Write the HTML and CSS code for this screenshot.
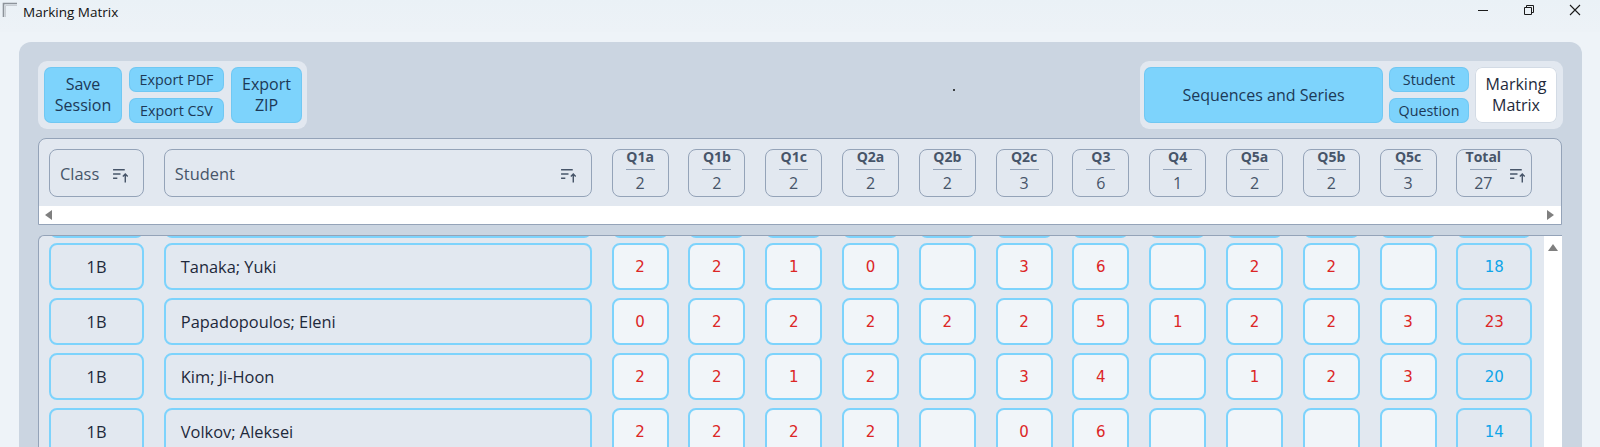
FILE: index.html
```html
<!DOCTYPE html>
<html lang="en">
<head>
<meta charset="utf-8">
<title>Marking Matrix</title>
<link rel="stylesheet" href="styles.css">
</head>
<body>
<header class="titlebar">
  <svg class="app-icon" width="18" height="18" viewBox="0 0 18 18"><path d="M3.5 17V3.5H17" fill="none" stroke="#8d939a" stroke-width="1.6"/><path d="M5.5 17V5.5H17" fill="none" stroke="#c9ced4" stroke-width="1"/></svg>
  <span class="app-title">Marking Matrix</span>
  <div class="win-controls">
    <svg class="win-btn" width="12" height="12" viewBox="0 0 12 12"><path d="M1 6.5h10" stroke="#1b1b1b" stroke-width="1"/></svg>
    <svg class="win-btn" width="12" height="12" viewBox="0 0 12 12"><path d="M1.5 3.5h7v7h-7z M3.5 3.5V1.5h7v7h-2" fill="none" stroke="#1b1b1b" stroke-width="1"/></svg>
    <svg class="win-btn" width="12" height="12" viewBox="0 0 12 12"><path d="M1 1l10 10M11 1L1 11" stroke="#1b1b1b" stroke-width="1.1"/></svg>
  </div>
</header>

<main class="window">
  <section class="panel">
    <div class="toolbar">
      <div class="btn-group">
        <button class="btn btn-tall w-save">Save<br>Session</button>
        <div class="btn-stack w-export">
          <button class="btn btn-small">Export PDF</button>
          <button class="btn btn-small">Export CSV</button>
        </div>
        <button class="btn btn-tall w-zip">Export<br>ZIP</button>
      </div>
      <div class="toolbar-mid"><span class="dot"></span></div>
      <div class="btn-group">
        <button class="btn btn-tall w-topic">Sequences and Series</button>
        <div class="btn-stack w-view">
          <button class="btn btn-small">Student</button>
          <button class="btn btn-small">Question</button>
        </div>
        <button class="btn btn-tall btn-active w-matrix">Marking<br>Matrix</button>
      </div>
    </div>

    <div class="grid-head">
      <div class="cols head-row">
        <div class="hcell h-class"><span>Class</span>
          <svg class="sort" width="17" height="17" viewBox="0 0 16 16"><path d="M1 3.5h11M1 7.5h7M1 11.5h4M12.5 15.5V7.5M10.2 9.8l2.3-2.3 2.3 2.3" fill="none" stroke="#475569" stroke-width="1.35"/></svg>
        </div>
        <div class="hcell h-name"><span>Student</span>
          <svg class="sort" width="17" height="17" viewBox="0 0 16 16"><path d="M1 3.5h11M1 7.5h7M1 11.5h4M12.5 15.5V7.5M10.2 9.8l2.3-2.3 2.3 2.3" fill="none" stroke="#475569" stroke-width="1.35"/></svg>
        </div>
        <div class="hcell h-q"><b>Q1a</b><i class="rule"></i><span>2</span></div>
        <div class="hcell h-q"><b>Q1b</b><i class="rule"></i><span>2</span></div>
        <div class="hcell h-q"><b>Q1c</b><i class="rule"></i><span>2</span></div>
        <div class="hcell h-q"><b>Q2a</b><i class="rule"></i><span>2</span></div>
        <div class="hcell h-q"><b>Q2b</b><i class="rule"></i><span>2</span></div>
        <div class="hcell h-q"><b>Q2c</b><i class="rule"></i><span>3</span></div>
        <div class="hcell h-q"><b>Q3</b><i class="rule"></i><span>6</span></div>
        <div class="hcell h-q"><b>Q4</b><i class="rule"></i><span>1</span></div>
        <div class="hcell h-q"><b>Q5a</b><i class="rule"></i><span>2</span></div>
        <div class="hcell h-q"><b>Q5b</b><i class="rule"></i><span>2</span></div>
        <div class="hcell h-q"><b>Q5c</b><i class="rule"></i><span>3</span></div>
        <div class="hcell h-total">
          <div class="total-stack"><b>Total</b><i class="rule"></i><span>27</span></div>
          <svg class="sort" width="17" height="17" viewBox="0 0 16 16"><path d="M1 3.5h11M1 7.5h7M1 11.5h4M12.5 15.5V7.5M10.2 9.8l2.3-2.3 2.3 2.3" fill="none" stroke="#475569" stroke-width="1.35"/></svg>
        </div>
      </div>
      <div class="hscroll">
        <span class="arrow arrow-left"></span>
        <span class="arrow arrow-right"></span>
      </div>
    </div>

    <div class="grid-body">
      <div class="rows">
        <div class="peek">
          <div class="cols row">
            <div class="cell c-class"></div><div class="cell c-name"></div>
            <div class="cell c-q"></div><div class="cell c-q"></div><div class="cell c-q"></div><div class="cell c-q"></div>
            <div class="cell c-q"></div><div class="cell c-q"></div><div class="cell c-q"></div><div class="cell c-q"></div>
            <div class="cell c-q"></div><div class="cell c-q"></div><div class="cell c-q"></div>
            <div class="cell c-total"></div>
          </div>
        </div>

        <div class="cols row">
          <div class="cell c-class">1B</div><div class="cell c-name">Tanaka; Yuki</div>
          <div class="cell c-q">2</div><div class="cell c-q">2</div><div class="cell c-q">1</div><div class="cell c-q">0</div>
          <div class="cell c-q"></div><div class="cell c-q">3</div><div class="cell c-q">6</div><div class="cell c-q"></div>
          <div class="cell c-q">2</div><div class="cell c-q">2</div><div class="cell c-q"></div>
          <div class="cell c-total">18</div>
        </div>

        <div class="cols row">
          <div class="cell c-class">1B</div><div class="cell c-name">Papadopoulos; Eleni</div>
          <div class="cell c-q">0</div><div class="cell c-q">2</div><div class="cell c-q">2</div><div class="cell c-q">2</div>
          <div class="cell c-q">2</div><div class="cell c-q">2</div><div class="cell c-q">5</div><div class="cell c-q">1</div>
          <div class="cell c-q">2</div><div class="cell c-q">2</div><div class="cell c-q">3</div>
          <div class="cell c-total is-high">23</div>
        </div>

        <div class="cols row">
          <div class="cell c-class">1B</div><div class="cell c-name">Kim; Ji-Hoon</div>
          <div class="cell c-q">2</div><div class="cell c-q">2</div><div class="cell c-q">1</div><div class="cell c-q">2</div>
          <div class="cell c-q"></div><div class="cell c-q">3</div><div class="cell c-q">4</div><div class="cell c-q"></div>
          <div class="cell c-q">1</div><div class="cell c-q">2</div><div class="cell c-q">3</div>
          <div class="cell c-total">20</div>
        </div>

        <div class="cols row">
          <div class="cell c-class">1B</div><div class="cell c-name">Volkov; Aleksei</div>
          <div class="cell c-q">2</div><div class="cell c-q">2</div><div class="cell c-q">2</div><div class="cell c-q">2</div>
          <div class="cell c-q"></div><div class="cell c-q">0</div><div class="cell c-q">6</div><div class="cell c-q"></div>
          <div class="cell c-q"></div><div class="cell c-q"></div><div class="cell c-q"></div>
          <div class="cell c-total">14</div>
        </div>
      </div>
      <div class="vscroll"><span class="arrow arrow-up"></span></div>
    </div>
  </section>
</main>
</body>
</html>
```

FILE: styles.css
```css
* { box-sizing: border-box; }

html, body {
  margin: 0;
  height: 447px;
  overflow: hidden;
}

body {
  background: #eef3f8;
  font-family: "Open Sans", "Noto Sans", sans-serif;
  color: #1e293b;
}

/* ---- window chrome ---- */
.titlebar {
  height: 32px;
  display: flex;
  align-items: flex-start;
  background: linear-gradient(#eaf1f6, #edf2f7);
}

.app-icon {
  margin: 0 0 0 0;
}

.app-title {
  margin: 3px 0 0 5px;
  font-size: 13.5px;
  line-height: 18px;
  color: #111;
}

.win-controls {
  margin-left: auto;
  display: flex;
  gap: 34px;
  padding: 4px 19px 0 0;
}

/* ---- main panel ---- */
.window {
  padding: 10px 18px 0 19px;
}

.panel {
  background: #cbd5e1;
  border-radius: 12px 12px 0 0;
  padding: 19px 19px 0 19px;
  height: 420px;
}

.toolbar {
  display: flex;
  align-items: stretch;
  height: 68px;
}

.btn-group {
  display: flex;
  gap: 7px;
  padding: 6px 5px 6px 6px;
  background: #e2e8f0;
  border-radius: 9px;
}

.btn-group + .toolbar-mid + .btn-group {
  gap: 6px;
  padding: 6px 6px 6px 4px;
}

.btn {
  font-family: inherit;
  border: none;
  margin: 0;
  padding: 0;
  background: #7dd3fc;
  color: #1c3957;
  border-radius: 7px;
  box-shadow: inset 0 0 0 1px rgba(56, 149, 205, 0.18);
  cursor: pointer;
}

.btn-tall {
  height: 56px;
  font-size: 16px;
  line-height: 21px;
}

.btn-small {
  height: 25px;
  font-size: 14.3px;
  line-height: 20px;
}

.btn-stack {
  display: flex;
  flex-direction: column;
  justify-content: space-between;
}

.btn-active {
  background: #ffffff;
  color: #1e293b;
  box-shadow: inset 0 0 0 1px #d3dbe5;
}

.w-save { width: 78px; }
.w-export { width: 95px; }
.w-zip { width: 71px; }
.w-topic { width: 239px; }
.w-view { width: 80px; }
.w-matrix { width: 82px; }

.toolbar-mid {
  flex: 1;
  display: flex;
  align-items: flex-start;
}

.dot {
  width: 2px;
  height: 2px;
  background: #111;
  border-radius: 1px;
  margin: 28px 0 0 646px;
}

/* ---- shared column template ---- */
.cols {
  display: grid;
  grid-template-columns: 95px 428px repeat(11, 57px) 76px;
  column-gap: 19.8px;
}

/* ---- header block ---- */
.grid-head {
  margin: 9px 1px 0 0;
  background: #e2e8f0;
  border: 1px solid #94a3b8;
  border-radius: 8px 8px 0 0;
  overflow: hidden;
}

.head-row {
  padding: 10px 0 9px 10px;
}

.hcell {
  height: 48px;
  border: 1px solid #94a3b8;
  border-radius: 8px;
  color: #475569;
}

.h-class, .h-name {
  display: flex;
  align-items: center;
  justify-content: space-between;
  font-size: 16.4px;
  padding: 0 14px 0 10px;
}

.h-name {
  padding-right: 14px;
}

.sort {
  flex: none;
  margin-top: 2px;
}

.h-q {
  display: flex;
  flex-direction: column;
  align-items: center;
}

.h-q b, .total-stack b {
  font-size: 14px;
  font-weight: 700;
  line-height: 18px;
  margin-top: -2px;
}

.rule {
  display: block;
  width: 29px;
  height: 1px;
  background: #94a3b8;
  margin: 3px 0 2px;
}

.h-q span, .total-stack span {
  font-size: 16px;
  line-height: 22px;
}

.h-total {
  display: flex;
  align-items: center;
  padding: 0 5px 0 0;
}

.total-stack {
  width: 56px;
  display: flex;
  flex-direction: column;
  align-items: center;
  align-self: flex-start;
}

.total-stack .rule {
  width: 27px;
}

.hscroll {
  height: 18px;
  background: #ffffff;
  display: flex;
  align-items: center;
  justify-content: space-between;
  padding: 0 7px 0 6px;
}

.arrow {
  width: 0;
  height: 0;
  border-style: solid;
  border-color: transparent;
}

.arrow-left {
  border-width: 5px 7px 5px 0;
  border-right-color: #7f7f7f;
}

.arrow-right {
  border-width: 5px 0 5px 7px;
  border-left-color: #7f7f7f;
}

.arrow-up {
  border-width: 0 5.5px 7px 5.5px;
  border-bottom-color: #7f7f7f;
}

/* ---- body block ---- */
.grid-body {
  margin: 10px 1px 0 0;
  height: 240px;
  display: flex;
  background: #e2e8f0;
  border-top: 1px solid #94a3b8;
  border-left: 1px solid #94a3b8;
  border-radius: 6px 0 0 0;
  overflow: hidden;
}

.rows {
  flex: 1;
  display: flex;
  flex-direction: column;
  gap: 8px;
  padding-left: 10px;
}

.peek {
  height: 2px;
  overflow: hidden;
  display: flex;
  align-items: flex-end;
  margin-bottom: -3px;
}

.row {
  height: 47px;
  flex: none;
}

.peek .row {
  width: 100%;
}

.cell {
  height: 47px;
  border: 2px solid #7dd3fc;
  border-radius: 8px;
  display: flex;
  align-items: center;
  justify-content: center;
}

.c-class {
  font-size: 16.4px;
  color: #1e293b;
}

.c-name {
  justify-content: flex-start;
  padding-left: 15px;
  font-size: 16.4px;
  color: #1e293b;
}

.c-q {
  background: #f1f5f9;
  font-family: "DejaVu Sans", Verdana, sans-serif;
  font-size: 15px;
  color: #dc2626;
}

.c-total {
  font-family: "DejaVu Sans", Verdana, sans-serif;
  font-size: 15px;
  color: #0ea5e9;
}

.c-total.is-high {
  color: #dc2626;
}

.vscroll {
  width: 18px;
  flex: none;
  background: #ffffff;
  display: flex;
  justify-content: center;
  padding-top: 8px;
}
```
